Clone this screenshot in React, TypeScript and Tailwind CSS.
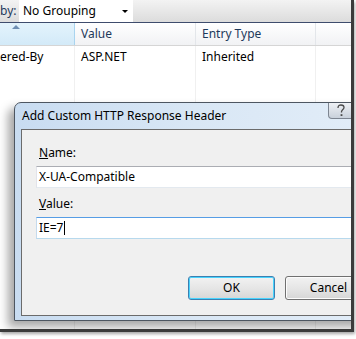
import React from "react";

const font = { fontFamily: '"Segoe UI", "Noto Sans", "Open Sans", sans-serif' };

const HelpIcon = () => (
  <svg width="10" height="13" viewBox="0 0 10 13" fill="none">
    <path
      d="M2 4 C2 1.5 3.5 1 5 1 C6.5 1 8 1.8 8 3.6 C8 5.4 5.5 5.6 5.5 7.8 L5.5 8.6"
      stroke="#4a4a4a"
      strokeWidth="1.3"
      fill="none"
    />
    <rect x="4.6" y="10.2" width="1.8" height="1.8" fill="#4a4a4a" />
  </svg>
);

const Header: React.FC = () => (
  <div className="flex h-[23px] border-b border-[#d5d5d5] bg-gradient-to-b from-[#ffffff] to-[#f1f2f4] text-[12px] text-[#1e395b]">
    <div className="relative w-[75px] border-r border-[#a9d4ef] bg-gradient-to-b from-[#e3f3fc] to-[#d3eaf8]">
      <svg className="absolute left-[12px] top-[1px]" width="8" height="5" viewBox="0 0 8 5">
        <path d="M0 5 L4 1 L8 5 Z" fill="#6f8fb3" />
      </svg>
    </div>
    <div className="flex w-[121px] items-center border-r border-[#e3e6ea] pl-[6px]">Value</div>
    <div className="flex w-[120px] items-center border-r border-[#e3e6ea] pl-[6px]">Entry Type</div>
    <div className="flex-1" />
  </div>
);

const Row: React.FC = () => (
  <div className="flex h-[22px] text-[12px] text-black">
    <div className="flex w-[75px] items-center whitespace-nowrap border-r border-[#f0f0f0]">ered-By</div>
    <div className="flex w-[121px] items-center border-r border-[#f0f0f0] pl-[6px]">ASP.NET</div>
    <div className="flex w-[120px] items-center border-r border-[#f0f0f0] pl-[6px]">Inherited</div>
    <div className="flex-1" />
  </div>
);

const Dialog: React.FC = () => (
  <div className="absolute left-[14px] top-[102px] h-[219px] w-[360px] rounded-tl-[7px] border border-[#4d5661] bg-gradient-to-r from-[#c8dcf1] via-[#d9e7f5] to-[#e2edf8] shadow-[-6px_6px_10px_rgba(0,0,0,0.35)]">
    <div className="flex h-[26px] items-center pl-[7px] text-[12px] text-black">
      Add Custom HTTP Response Header
    </div>
    <div className="absolute left-[313px] top-0 flex h-[16px] w-[26px] items-center justify-center rounded-b-[4px] border border-t-0 border-[#7d8591] bg-gradient-to-b from-[#eef1f5] to-[#c9d1db]">
      <HelpIcon />
    </div>
    <div className="ml-[6px] h-[187px] border border-[#6b6b6b] bg-[#f0f0f0] text-[12px] text-black">
      <div className="pl-[17px] pt-[14px]">
        <div className="h-[18px] leading-[18px]">
          <span className="underline">N</span>ame:
        </div>
        <div className="ml-[-3px] mt-[4px] flex h-[22px] items-center border border-[#abadb3] border-l-[#e2e3ea] border-b-[#e3e9ef] bg-white pl-[2px]">
          X-UA-Compatible
        </div>
        <div className="mt-[7px] h-[18px] leading-[18px]">
          <span className="underline">V</span>alue:
        </div>
        <div className="ml-[-3px] mt-[4px] flex h-[22px] items-center border border-[#569de5] border-l-[#c5daed] border-b-[#b7d9ed] bg-white pl-[2px]">
          IE=7<span className="ml-[1px] inline-block h-[14px] w-px bg-black" />
        </div>
        <div className="mt-[37px] flex gap-[10px] pl-[149px]">
          <div className="flex h-[24px] w-[91px] items-center justify-center rounded-[3px] border border-[#3c7fb1] bg-gradient-to-b from-[#f2f2f2] via-[#e6e6e6] to-[#d6d6d6] shadow-[inset_0_0_0_1px_#48d3fd]">
            OK
          </div>
          <div className="flex h-[24px] w-[91px] items-center justify-center rounded-[3px] border border-[#707070] bg-gradient-to-b from-[#f2f2f2] via-[#e6e6e6] to-[#d6d6d6] shadow-[inset_0_0_0_1px_#fcfcfc]">
            Cancel
          </div>
        </div>
      </div>
    </div>
  </div>
);

export default function App() {
  return (
    <div className="h-[339px] w-[356px] bg-white" style={font}>
      <div className="relative h-[332px] w-[354px] overflow-hidden border-b-[3px] border-r-[3px] border-[#3b3b3b] bg-white shadow-[1px_2px_3px_rgba(0,0,0,0.35)]">
        <div className="flex h-[22px] items-center bg-gradient-to-b from-[#f3f3f3] to-[#dcdcdc] text-[12px] text-[#1e395b]">
          <span className="w-[19px]">by:</span>
          <div className="flex h-[22px] w-[114px] items-center justify-between bg-white pl-[4px] pr-[5px] text-black">
            <span>No Grouping</span>
            <svg width="6" height="3" viewBox="0 0 6 3">
              <path d="M0 0 L6 0 L3 3 Z" fill="#000" />
            </svg>
          </div>
        </div>
        <div className="h-px bg-[#3e4c6d]" />
        <Header />
        <div className="h-[290px] bg-white">
          <Row />
          <div className="flex h-[268px]">
            <div className="w-[75px] border-r border-[#f0f0f0]" />
            <div className="w-[121px] border-r border-[#f0f0f0]" />
            <div className="w-[120px] border-r border-[#f0f0f0]" />
          </div>
        </div>
        <Dialog />
      </div>
    </div>
  );
}
